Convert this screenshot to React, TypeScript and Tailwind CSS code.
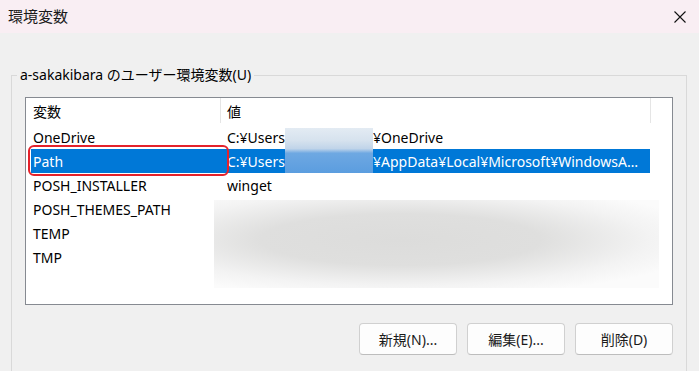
const rows = [
  { name: "OneDrive", pre: "C:¥Users¥", rest: "¥OneDrive" },
  { name: "Path", pre: "C:¥Users¥", rest: "¥AppData¥Local¥Microsoft¥WindowsA…", selected: true },
  { name: "POSH_INSTALLER", pre: "winget", rest: "" },
  { name: "POSH_THEMES_PATH", pre: "", rest: "" },
  { name: "TEMP", pre: "", rest: "" },
  { name: "TMP", pre: "", rest: "" },
]

function CloseIcon() {
  return (
    <svg width="12" height="12" viewBox="0 0 12 12" fill="none">
      <path d="M0.5 0.5 L11.5 11.5 M11.5 0.5 L0.5 11.5" stroke="#111" strokeWidth="1.1" />
    </svg>
  )
}

export default function App() {
  return (
    <div className="w-[699px] h-[371px] overflow-hidden bg-[#f0f0f0] text-[14px] text-black font-['Noto_Sans','Noto_Sans_CJK_JP',sans-serif]">
      {/* title bar */}
      <div className="h-[33px] bg-[#f9eef3] flex items-center justify-between pl-[8px] pr-[13px]">
        <span className="text-[15px] text-[#1a1a1a]">環境変数</span>
        <CloseIcon />
      </div>

      <fieldset className="mt-[32px] ml-[11px] mr-[12px] h-[400px] border border-[#d9d9d9] pl-[13px] pr-[13px]">
        <legend className="-ml-[8px] px-[3px] leading-[20px]">a-sakakibara のユーザー環境変数(U)</legend>

        <div className="relative mt-[12px] h-[208px] border border-[#868a91] bg-white">
          {/* header */}
          <div className="flex h-[27px]">
            <div className="w-[194px] pl-[7px] flex items-center">変数</div>
            <div className="w-px h-[25px] bg-[#e5e5e5]" />
            <div className="w-[429px] pl-[6px] flex items-center">値</div>
            <div className="w-px h-[25px] bg-[#e5e5e5]" />
          </div>

          {/* rows */}
          <div className="pl-[5px]">
            {rows.map((r) => (
              <div
                key={r.name}
                className={`flex h-[24px] w-[619px] items-center ${r.selected ? "bg-[#0078d7] text-white" : ""}`}
              >
                <div className="w-[196px] pl-[2px] whitespace-nowrap">{r.name}</div>
                <div className="flex w-[423px] min-w-0 whitespace-nowrap overflow-hidden">
                  <span className={r.rest ? "w-[146px] shrink-0 overflow-hidden" : ""}>{r.pre}</span>
                  <span>{r.rest}</span>
                </div>
              </div>
            ))}
          </div>

          {/* blurred user name */}
          <div className="absolute left-[259px] top-[30px] w-[88px] h-[45px] bg-[linear-gradient(to_bottom,#e3ebf3_0%,#d6e2ee_28%,#c0d4e9_46%,#6ea8e2_56%,#5b9ddf_100%)]" />
          {/* blurred values */}
          <div className="absolute left-[188px] top-[102px] w-[445px] h-[88px] bg-[radial-gradient(ellipse_70%_65%_at_42%_45%,#dcdcdb_0%,#dfdfde_45%,#f3f3f3_80%,#fbfbfb_100%)]" />
          {/* red annotation */}
          <div className="absolute left-[2px] top-[47px] w-[201px] h-[31px] border-2 border-[#e4222b] rounded-[6px]" />
        </div>

        <div className="mt-[18px] flex justify-end gap-[10px]">
          {["新規(N)...", "編集(E)...", "削除(D)"].map((label) => (
            <button
              key={label}
              className="w-[98px] h-[32px] rounded-[4px] border border-[#d0d0d0] border-b-[#bdbdbd] bg-[#fdfdfd] text-[14px] text-[#1a1a1a]"
            >
              {label}
            </button>
          ))}
        </div>
      </fieldset>
    </div>
  )
}
